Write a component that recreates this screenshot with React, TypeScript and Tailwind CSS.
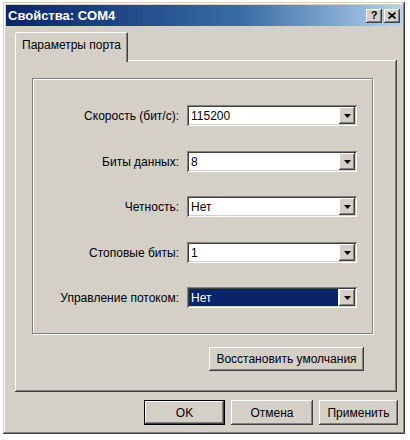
import React from 'react';

// classic 3D borders
const raised =
  'shadow-[inset_-1px_-1px_#404040,inset_1px_1px_#ffffff,inset_-2px_-2px_#808080,inset_2px_2px_#D4D0C8]';
const sunken =
  'shadow-[inset_1px_1px_#808080,inset_-1px_-1px_#ffffff,inset_2px_2px_#404040,inset_-2px_-2px_#D4D0C8]';

const rows = [
  { label: 'Скорость (бит/с):', value: '115200', mt: 'mt-[26px]' },
  { label: 'Биты данных:', value: '8', mt: 'mt-[25px]' },
  { label: 'Четность:', value: 'Нет', mt: 'mt-[24px]' },
  { label: 'Стоповые биты:', value: '1', mt: 'mt-[25px]' },
  { label: 'Управление потоком:', value: 'Нет', mt: 'mt-[24px]', selected: true },
];

const Arrow = () => (
  <svg width="7" height="4" viewBox="0 0 7 4">
    <path d="M0 0h7L3.5 4z" fill="#000" />
  </svg>
);

const Combo: React.FC<{ value: string; selected?: boolean }> = ({ value, selected }) => (
  <div className={`w-[170px] h-[21px] bg-white p-[2px] flex ${sunken}`}>
    <div
      className={`flex-1 flex items-center pl-[2px] mr-[1px] text-[12px] leading-none ${
        selected ? 'bg-[#0A246A] text-white' : 'text-black'
      }`}
    >
      {value}
    </div>
    <div className={`w-[16px] h-full bg-[#D4D0C8] flex items-center justify-center ${raised}`}>
      <Arrow />
    </div>
  </div>
);

const Button: React.FC<{ label: string; className?: string; isDefault?: boolean }> = ({
  label,
  className = '',
  isDefault,
}) => (
  <div className={`${className} ${isDefault ? 'border border-black' : ''}`}>
    <div className={`w-full h-full bg-[#D4D0C8] flex items-center justify-center text-[12px] text-black ${raised}`}>
      {label}
    </div>
  </div>
);

const TitleButton: React.FC<{ children: React.ReactNode }> = ({ children }) => (
  <div
    className={`w-[16px] h-[14px] bg-[#D4D0C8] flex items-center justify-center text-[11px] font-bold text-black leading-none ${raised}`}
  >
    {children}
  </div>
);

export default function App() {
  return (
    <div className="w-[410px] h-[440px] bg-white pl-[3px] pt-[2px] font-['Liberation_Sans',Arial,sans-serif]">
      <div className="w-[402px] h-[432px] bg-[#D4D0C8] p-[3px] flex flex-col shadow-[inset_-1px_-1px_#404040,inset_1px_1px_#D4D0C8,inset_-2px_-2px_#808080,inset_2px_2px_#ffffff]">
        {/* title bar */}
        <div className="h-[21px] flex items-center justify-between pl-[2px] pr-[2px] bg-gradient-to-r from-[#0A246A] via-[#3A6EA5] via-60% to-[#B6D2F0]">
          <span className="text-white text-[13px] font-bold leading-none">Свойства: COM4</span>
          <div className="flex gap-[2px]">
            <TitleButton>?</TitleButton>
            <TitleButton>
              <svg width="8" height="7" viewBox="0 0 8 7">
                <path d="M0.5 0.5l7 6M7.5 0.5l-7 6" stroke="#000" strokeWidth="1.6" />
              </svg>
            </TitleButton>
          </div>
        </div>

        {/* tab header */}
        <div className="pl-[9px] mt-[6px] flex">
          <div className="relative z-10 -mb-[2px] h-[30px] px-[7px] pb-[4px] bg-[#D4D0C8] rounded-t-[2px] flex items-center text-[12px] text-black shadow-[inset_1px_1px_#ffffff,inset_-1px_0_#404040,inset_-2px_0_#808080]">
            Параметры порта
          </div>
        </div>

        {/* tab panel */}
        <div className={`ml-[9px] w-[382px] h-[332px] pt-[18px] pl-[17px] flex flex-col ${raised}`}>
          <div className="w-[341px] h-[256px] border border-[#808080] shadow-[inset_1px_1px_#ffffff,1px_1px_#ffffff] flex flex-col">
            {rows.map(r => (
              <div key={r.label} className={`${r.mt} h-[21px] flex items-center`}>
                <span className="w-[146px] mr-[8px] text-right text-[12px] text-black">{r.label}</span>
                <Combo value={r.value} selected={r.selected} />
              </div>
            ))}
          </div>
          <div className="flex justify-end pr-[33px] mt-[13px]">
            <Button label="Восстановить умолчания" className="w-[155px] h-[24px]" />
          </div>
        </div>

        {/* dialog buttons */}
        <div className="flex justify-end gap-[6px] pr-[4px] mt-[8px]">
          <Button label="OK" className="w-[81px] h-[25px]" isDefault />
          <Button label="Отмена" className="w-[82px] h-[25px]" />
          <Button label="Применить" className="w-[79px] h-[25px]" />
        </div>
      </div>
    </div>
  );
}
